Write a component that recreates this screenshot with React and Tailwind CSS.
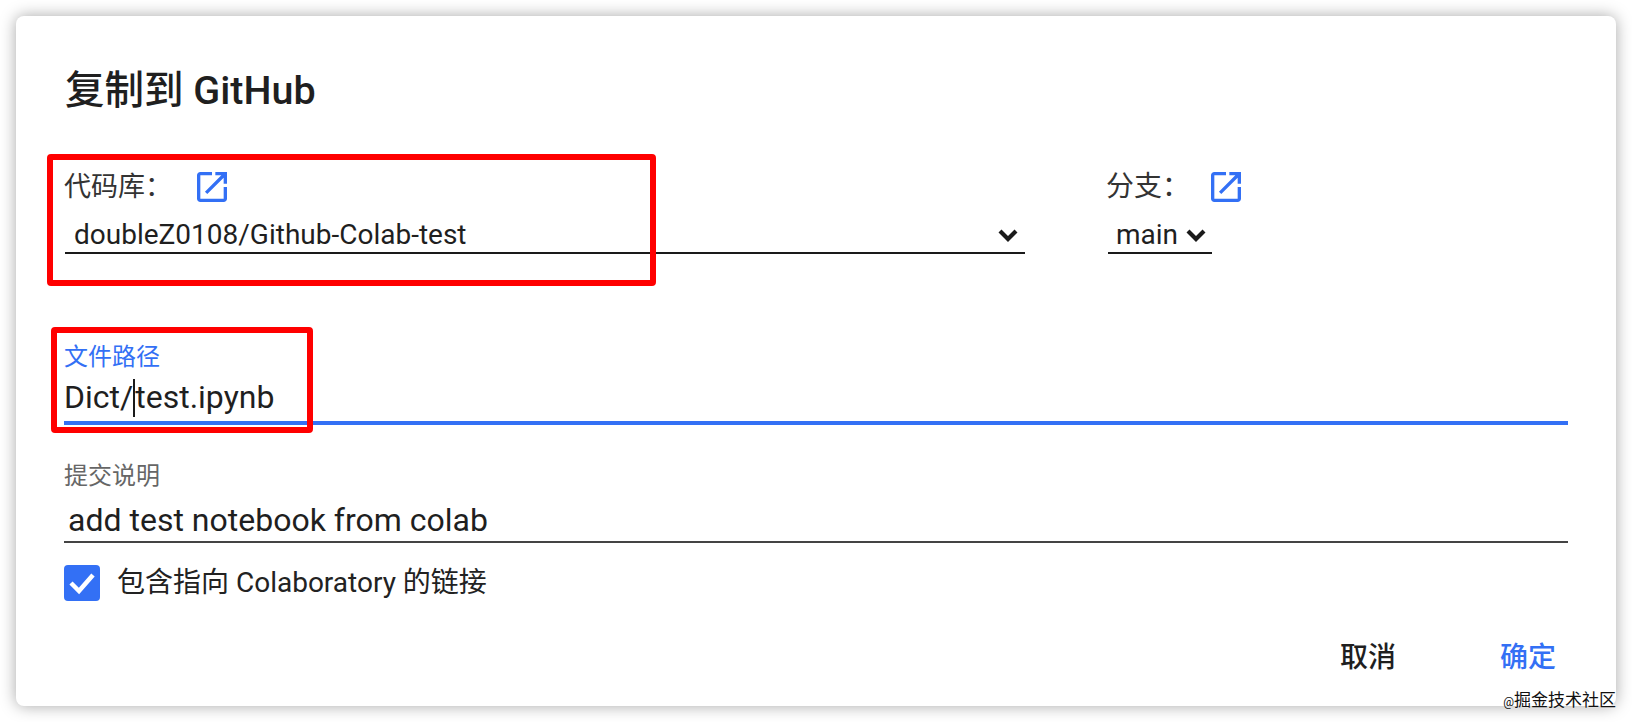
import React from 'react';

const FONT = "font-['Roboto','Noto_Sans_CJK_SC',sans-serif]";

const OpenIcon = () => (
  <svg width="40" height="40" viewBox="0 0 24 24" fill="#3370f5">
    <path d="M19 19H5V5h7V3H5c-1.11 0-2 .9-2 2v14c0 1.1.89 2 2 2h14c1.1 0 2-.9 2-2v-7h-2v7zM14 3v2h3.59l-9.83 9.83 1.41 1.41L19 6.41V10h2V3h-7z" />
  </svg>
);

const Chevron = () => (
  <svg width="20" height="14" viewBox="0 0 20 14" fill="none" stroke="#1a1a1a" strokeWidth="4.2">
    <path d="M2 3l8 8 8-8" />
  </svg>
);

const App = () => {
  return (
    <div className={`${FONT} w-[1632px] h-[722px] bg-white p-4 overflow-hidden`}>
      <div className="relative w-[1600px] h-[690px] bg-white rounded-lg shadow-[0_0_16px_rgba(0,0,0,0.35)] pt-[47px] px-12 text-[#1f1f1f]">
        <h1 className="text-[39.5px] leading-[56px] font-medium pl-[1px]">复制到 GitHub</h1>

        {/* repo + branch */}
        <div className="flex mt-[48px]">
          <div className="w-[960px] ml-[1px]">
            <div className="flex items-center h-10 -ml-[1px]">
              <span className="text-[27px] w-[128px] text-[#333]">代码库：</span>
              <OpenIcon />
            </div>
            <div className="flex items-center justify-between h-[34px] pt-[2px] mt-[9px] pl-[9px] pr-[7px] border-b-2 border-[#1a1a1a] box-content text-[28px] leading-none">
              <span>doubleZ0108/Github-Colab-test</span>
              <Chevron />
            </div>
          </div>
          <div className="ml-[83px]">
            <div className="flex items-center h-10 -ml-[2px]">
              <span className="text-[28px] w-[100px] text-[#333]">分支：</span>
              <OpenIcon />
            </div>
            <div className="flex items-center gap-[8px] w-[96px] h-[34px] pt-[2px] mt-[9px] pl-[8px] border-b-2 border-[#1a1a1a] box-content text-[28px] leading-none">
              <span>main</span>
              <Chevron />
            </div>
          </div>
        </div>

        {/* path */}
        <div className="mt-[88px]">
          <div className="text-[24px] leading-[30px] text-[#3370f5]">文件路径</div>
          <div className="h-[47px] border-b-4 border-[#3370f5] box-content text-[32px] leading-[46px] mt-[2px]">
            Dict/<span className="inline-block w-0 h-[38px] border-l-2 border-[#1a1a1a] align-[-9px]"></span>test.ipynb
          </div>
        </div>

        {/* commit message */}
        <div className="mt-[36px]">
          <div className="text-[24px] leading-[30px] text-[#666]">提交说明</div>
          <div className="h-[47px] border-b-2 border-[#444] box-content text-[32px] leading-[52px] pl-[4px] mt-[3px]">
            add test notebook from colab
          </div>
        </div>

        {/* include link */}
        <div className="flex items-center gap-[17px] mt-[19px]">
          <div className="flex items-center justify-center w-9 h-9 rounded bg-[#3370f5]">
            <svg width="30" height="30" viewBox="0 0 30 30" fill="none" stroke="#ffffff" strokeWidth="4.5">
              <path d="M4 15l8 8L26 7" />
            </svg>
          </div>
          <span className="text-[28px] text-[#222]">包含指向 Colaboratory 的链接</span>
        </div>

        {/* actions */}
        <div className="flex justify-end gap-[104px] mt-[36px] pr-[12px] text-[28px] leading-9 font-medium">
          <button>取消</button>
          <button className="text-[#3370f5]">确定</button>
        </div>

        {/* annotation boxes */}
        <div className="absolute left-[31px] top-[138px] w-[609px] h-[132px] border-[6px] border-[#ff0000] rounded-sm"></div>
        <div className="absolute left-[35px] top-[311px] w-[262px] h-[106px] border-[6px] border-[#ff0000] rounded-sm"></div>

        {/* watermark */}
        <div className="absolute right-0 bottom-[-5px] text-[17px] leading-[18px] text-[#111] [text-shadow:0_0_2px_#ffffff]">
          <span className="text-[12px]">@</span>掘金技术社区
        </div>
      </div>
    </div>
  );
};

export default App;
